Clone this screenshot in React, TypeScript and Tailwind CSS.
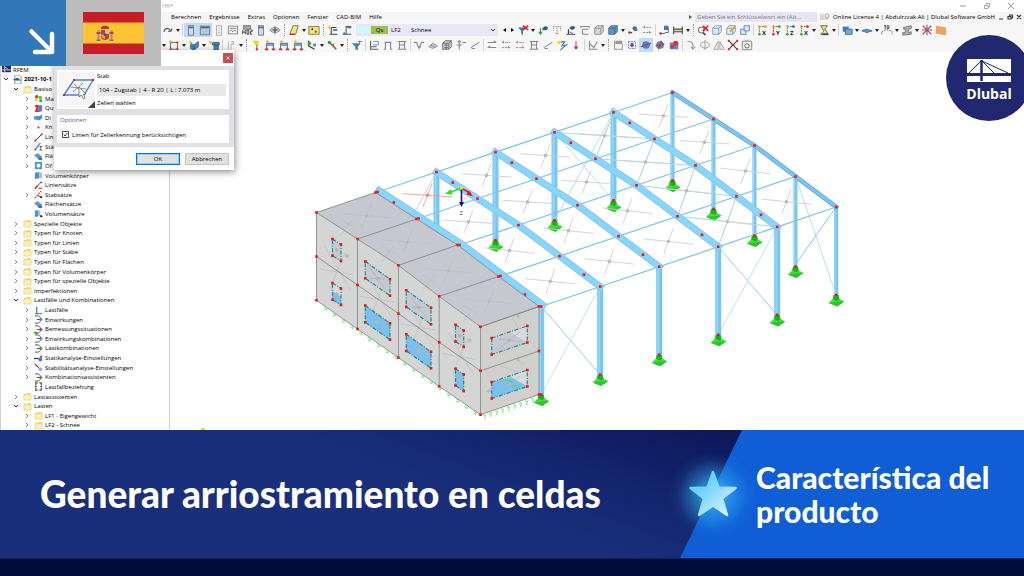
import React from 'react';

type Pt = [number, number];

const menuItems = ['Berechnen', 'Ergebnisse', 'Extras', 'Optionen', 'Fenster', 'CAD-BIM', 'Hilfe'];

/* ---------- toolbar icons, all on a 14 x 14 grid ---------- */

const Axis = ({ label, a, b }: { label: string; a: string; b: string }) => (
    <>
        <path d="M4 12V3H11" fill="none" stroke={a} strokeWidth="1.2" strokeDasharray="2 1" />
        <circle cx="4" cy="3" r="1.6" fill="#e8a21c" />
        <circle cx="11" cy="3" r="1.6" fill={b} />
        <circle cx="4" cy="12" r="1.5" fill={a} />
        <text x="7" y="12.5" fontSize="7" fontWeight="700" fontFamily="Open Sans, sans-serif" fill="#222">{label}</text>
    </>
);

const Cube = ({ fill, line }: { fill: string; line: string }) => (
    <path d="M2 5L5 2H12V9L9 12H2ZM2 5H9V12M9 5L12 2" fill={fill} stroke={line} strokeWidth="1" />
);

const icons: Record<string, React.ReactNode> = {
    undo: <path d="M2 9C4 4 8 4 10 8M7 8.5H10.5L11.5 5" fill="none" stroke="#555" strokeWidth="1.3" />,
    pillar: <><rect x="4" y="2" width="6" height="11" fill="#c7ddf0" stroke="#777" /><path d="M4 4H10" stroke="#667" strokeWidth="2" /></>,
    panel: <><rect x="1.5" y="2.5" width="11" height="10" fill="#b9c7d6" stroke="#778" /><path d="M2 4H12" stroke="#567" strokeWidth="2" /></>,
    sheet: <><rect x="4" y="2" width="6" height="11" fill="#fafafa" stroke="#aaa" /><path d="M6 5H8M6 8H8M6 10H8" stroke="#aaa" /></>,
    wave: <><rect x="1.5" y="2.5" width="11" height="9" fill="#fff" stroke="#777" /><path d="M3 5H11M3 9L5 7L7 9L9 7L11 9" fill="none" stroke="#666" /></>,
    print: <><rect x="3" y="2" width="8" height="4" fill="#aaa" stroke="#666" /><path d="M2 7V12M2 9.5H5M5 7V12M7 7V12H9V7H7M11 7H13V9H11V12H13" fill="none" stroke="#333" /></>,
    eye: <><path d="M1 7C4 3 10 3 13 7C10 11 4 11 1 7Z" fill="#ddd" stroke="#888" /><path d="M7 2V12M3 7H11" stroke="#666" /><circle cx="7" cy="7" r="2" fill="#666" /></>,
    area: <><path d="M2 12L6 2H12L9 12Z" fill="#f6e96b" stroke="#666" /><path d="M2 12H8" stroke="#d22" strokeWidth="1.5" /></>,
    yellow: <><rect x="1" y="3" width="12" height="9" fill="#f8e45c" stroke="#777" /><circle cx="5" cy="6" r="1" /><circle cx="9" cy="9" r="1.3" fill="#666" /></>,
    loadNew: <><path d="M3 12H12M5 12V4H11" fill="none" stroke="#444" strokeWidth="1.2" /><path d="M1 4H5M3 2V6" stroke="#e7cb1a" strokeWidth="1.5" /><path d="M7 7H12" stroke="#3a7bc0" strokeWidth="2" /></>,
    load: <><path d="M2 12H12M6 12V3H12" fill="none" stroke="#555" strokeWidth="1.2" /><path d="M7 4H12M3 10L5 12" stroke="#3a7bc0" strokeWidth="2" /></>,
    filterX: <><path d="M1 4H10L7 8V13L5 11V8Z" fill="#2f76bb" /><path d="M7 2L13 7M13 2L7 7" stroke="#e01818" strokeWidth="1.8" /></>,
    filter: <><path d="M1 5H11L8 9V13L5 12V9Z" fill="#3d83c4" /><path d="M8 3H13M10 2V6" stroke="#777" /></>,
    point: <><path d="M4 5V12M2 9L4 12L6 9" fill="none" stroke="#3a9b3a" strokeWidth="1.3" /><path d="M6 6C8 1 12 2 13 5C11 8 8 8 6 6Z" fill="#345b88" /></>,
    arrows: <path d="M2 3H12M3 4V8M7 4V12M11 4V8M5 10L7 12L9 10" fill="none" stroke="#888" strokeDasharray="2 1" />,
    base: <><path d="M2 12H12M4 12V6" stroke="#444" strokeWidth="1.3" /><path d="M5 5C7 1 11 2 12 4C10 8 7 7 5 5Z" fill="#2f5f99" /><path d="M5 9L9 11" stroke="#b33" /></>,
    frame: <path d="M2 3H12M2 3V5M12 3V5M4 12V6H11M4 12H11" fill="none" stroke="#888" strokeWidth="1.2" />,
    cubeGrey: <Cube fill="#d6d6d6" line="#888" />,
    cubeBlue: <Cube fill="#5b96cc" line="#456b98" />,
    cubeLight: <Cube fill="#dfeaf7" line="#7d97bb" />,
    cubeEdit: <><Cube fill="#dfeaf7" line="#7d97bb" /><path d="M6 9L12 3" stroke="#e69d2c" strokeWidth="2" /></>,
    cubes: <><rect x="2" y="6" width="6" height="6" fill="#dfe8f3" stroke="#6683a8" /><rect x="6" y="2" width="6" height="6" fill="#dfe8f3" stroke="#6683a8" /></>,
    link: <><path d="M2 10H6M8 7H12" stroke="#444" strokeWidth="1.5" /><circle cx="9" cy="5" r="2.5" fill="#3f6eab" /><circle cx="3" cy="10" r="1.5" fill="#c33" /></>,
    dim: <path d="M2 4H12M2 10H12M4 2V6M10 8V12" fill="none" stroke="#888" strokeDasharray="3 1" />,
    diagram: <><path d="M2 11H8M9 4H12V10H8" fill="none" stroke="#555" /><rect x="7" y="2" width="5" height="5" fill="#4678b8" /><circle cx="3" cy="11" r="1.5" fill="#c33" /></>,
    beam: <><path d="M2 3V12M12 3V12M2 6H12M2 9H12" fill="none" stroke="#444" strokeWidth="1.3" /><path d="M3 7.5H11" stroke="#d9c34a" /></>,
    searchX: <><circle cx="5" cy="7" r="3.5" fill="none" stroke="#555" /><path d="M7 10L10 13" stroke="#555" strokeWidth="2" /><path d="M7 2L13 8M13 2L7 8" stroke="#e01818" strokeWidth="1.8" /></>,
    axX: <Axis label="X" a="#36a436" b="#e8a21c" />,
    axY: <Axis label="Y" a="#e42222" b="#36a436" />,
    axZ: <Axis label="Z" a="#36a436" b="#2a62d0" />,
    axN: <Axis label="X" a="#36a436" b="#e42222" />,
    plane: <><path d="M3 2H11L8 6L12 12H3L7 8Z" fill="#f4e66e" stroke="#555" /><path d="M5 12H12" stroke="#444" strokeWidth="2" /></>,
    solid: <><path d="M2 3H9V9H2Z" fill="#467bb5" /><path d="M5 6H13V12H5Z" fill="#7ca6d2" stroke="#44688f" /></>,
    flat: <path d="M1 8L6 6L13 8L7 10Z" fill="#5c9bd5" stroke="#3a6b9e" />,
    ten: <><text x="3" y="6" fontSize="6" fontWeight="700" fontFamily="Open Sans, sans-serif" fill="#333">10</text><path d="M1 12V9C4 6 10 6 13 9V12" fill="none" stroke="#666" strokeDasharray="2 1" /></>,
    isect: <path d="M3 4L12 2V5L9 6V10L12 9V12L2 13V10L5 10V6L3 6Z" fill="#aaa" stroke="#777" />,
    star: <path d="M2 2L12 12M12 2L2 12M7 1V13M1 7H13" stroke="#a85a70" strokeWidth="1.4" />,
    orange: <path d="M1 2L13 4V13L1 11Z" fill="#f0a35a" />,
    member: <><path d="M3 4H11V12H3Z" fill="none" stroke="#555" /><path d="M2 4H4M10 4H12M2 12H4M10 12H12" stroke="#d22" strokeWidth="2.4" /><path d="M1 3H5M3 1V5" stroke="#e7cb1a" /></>,
    solidNew: <><path d="M3 5L7 7V13L3 11ZM7 7L12 3V9L7 13Z" fill="#4d8bc9" stroke="#2f6093" /><path d="M1 4H5M3 2V6" stroke="#e7cb1a" strokeWidth="1.5" /></>,
    wall: <><path d="M5 4H13V7H5ZM7 7H12V13H7Z" fill="#4a83bd" stroke="#345b88" /><path d="M1 4H5M3 2V6" stroke="#e7cb1a" strokeWidth="1.5" /></>,
    ghost: <path d="M4 3V12M7 3H10V6H7V12" fill="none" stroke="#bbb" strokeWidth="1.3" />,
    flag: <><path d="M8 3V13" stroke="#888" strokeWidth="1.5" /><path d="M3 2H10V7H6Z" fill="#f0d71c" /><circle cx="8" cy="12" r="1.3" fill="#d22" /></>,
    hall: <><path d="M3 12V5H11V12M3 7H11" fill="none" stroke="#5e86b5" strokeWidth="1.5" /><path d="M1 12H5M9 12H13" stroke="#d22" strokeWidth="2" /><path d="M2 3H6M4 1V5" stroke="#e7cb1a" strokeWidth="1.4" /></>,
    member2: <><path d="M3 2V8L10 12" fill="none" stroke="#444" strokeWidth="1.5" /><circle cx="4" cy="5" r="2" fill="#3ea53e" /><circle cx="10" cy="7" r="2" fill="#888" /></>,
    green: <><path d="M3 3L12 12" stroke="#d22" strokeWidth="1.5" /><circle cx="4" cy="4" r="2" fill="#2fa52f" /><path d="M6 8L9 5L10 9Z" fill="#2fa52f" /></>,
    axes: <><path d="M3 2V12H12M3 9H10" fill="none" stroke="#666" strokeWidth="1.3" /><path d="M6 3H12V7H6" fill="none" stroke="#5c88bc" /></>,
    portal: <path d="M2 12H4V4H10V12H12M3 4H11" fill="none" stroke="#888" strokeWidth="1.3" />,
    ibeam: <path d="M2 3H12M2 12H12M4 3V12M10 3V12M4 7H10" fill="none" stroke="#888" strokeWidth="1.2" />,
    vee: <path d="M1 4H4L7 11L10 4H13M7 11L9 9" fill="none" stroke="#888" strokeWidth="1.3" />,
    net: <path d="M2 9L7 5L12 8L7 11ZM4 7L10 10" fill="#ccc" stroke="#888" />,
    cubeNet: <><Cube fill="#ccc" line="#666" /><path d="M4 7H8M4 10H8M6 5V12" stroke="#666" /></>,
    updown: <path d="M5 2V12M3 4L5 2L7 4M2 7H8M9 4H13" fill="none" stroke="#888" strokeWidth="1.2" />,
    slope: <path d="M2 10L12 4M3 11H7" stroke="#888" strokeWidth="1.2" />,
    lines: <path d="M2 4H12M2 10H12M9 2L12 4M5 8L2 10" fill="none" stroke="#888" strokeWidth="1.2" />,
    bolt: <><path d="M3 4L10 3L7 8L12 7L5 13" fill="none" stroke="#4a7fc0" strokeWidth="1.4" /><path d="M1 4H6M4 2V6" stroke="#f0dc20" strokeWidth="2" /></>,
    pin: <><path d="M7 2V11" stroke="#e55" strokeWidth="1.3" /><circle cx="7" cy="10" r="2" fill="#d428d4" /></>,
    cut: <path d="M3 2V12H12M3 5L8 10L12 3" fill="none" stroke="#888" strokeWidth="1.2" />,
    list: <><rect x="4" y="2" width="8" height="4" fill="#999" /><path d="M3 2V12H12V6" fill="none" stroke="#888" /></>,
    target: <><path d="M3 3H11V11H3Z" fill="none" stroke="#6a6ab8" strokeDasharray="2 1" /><circle cx="7" cy="7" r="2.2" fill="#5050b0" /></>,
    plate: <><circle cx="7" cy="7" r="4.5" fill="#4d86c2" /><path d="M1 9L13 5" stroke="#c33" strokeWidth="1.4" /></>,
    plate2: <><circle cx="7" cy="7" r="4.5" fill="#4d86c2" /><path d="M5 12L9 2M2 8L12 6" stroke="#c33" strokeWidth="1.4" /></>,
    plate3: <><path d="M2 4H12V12H2Z" fill="#5a8ec4" /><circle cx="9" cy="5" r="3" fill="#d33" /><circle cx="5" cy="9" r="2" fill="#d33" /></>,
    hook: <path d="M3 3C9 2 10 7 9 11M7 9L9 12L12 9" fill="none" stroke="#999" strokeWidth="1.2" />,
    ellipse: <><ellipse cx="7" cy="7" rx="5" ry="3.5" fill="none" stroke="#999" /><path d="M7 1V13" stroke="#999" /></>,
    mirror: <path d="M6 3V12H1ZM8 3V12H13Z" fill="none" stroke="#999" />,
    cross: <><path d="M2 2L12 12M12 2L2 12" stroke="#444" strokeWidth="1.3" /><path d="M1 2H3M11 2H13M1 12H3M11 12H13M5.5 7H8.5" stroke="#e01818" strokeWidth="2.5" /></>,
    camera: <><rect x="1.5" y="2.5" width="11" height="10" rx="1" fill="#eee" stroke="#777" /><circle cx="7" cy="8" r="2.5" fill="#fff" stroke="#555" /><path d="M4 2.5L5 1H9L10 2.5" fill="#bbb" /></>,
};

// "v" = drop-down arrow, "|" = separator, ":" = grip, "*name" = pressed
const rowOneLeft = 'undo v | *pillar *panel sheet wave print pillar eye : area v yellow : loadNew load'.split(' ');
const rowOneRight = 'filterX v point arrows base frame cubeGrey cubeBlue v link dim | diagram beam v : searchX cubeLight cubeEdit cubes | axX axY axZ axN v plane v | solid v flat v ten v isect v star orange'.split(' ');
const rowTwo = 'v member v solidNew v wall | ghost v : flag hall hall hall member2 v green v : filter | axes portal ibeam | vee net cubeNet updown slope | lines dim dim ibeam slope bolt pin | cut v : list target *plate plate2 plate3 | hook ellipse mirror cross camera'.split(' ');

const Tools = ({ items }: { items: string[] }) => (
    <div className="flex items-center shrink-0">
        {items.map((item, i) => {
            if (item === '|') return <span key={i} className="w-px h-3 mx-px bg-gray-300 shrink-0" />;
            if (item === ':') return <span key={i} className="h-3 mx-0.5 border-l border-dotted border-gray-400 shrink-0" />;
            if (item === 'v') {
                return (
                    <button key={i} aria-label="Mehr" className="w-1.5 h-3.5 flex items-center justify-center shrink-0">
                        <svg viewBox="0 0 4 3" className="w-1 h-[3px]"><path d="M0 0H4L2 3Z" fill="#222" /></svg>
                    </button>
                );
            }
            const on = item[0] === '*';
            const name = on ? item.slice(1) : item;
            return (
                <button key={i} aria-label={name} className={`w-3.5 h-3.5 flex items-center justify-center shrink-0 ${on ? 'bg-[#bcdcf7]' : ''}`}>
                    <svg viewBox="0 0 14 14" className="w-3 h-3">{icons[name]}</svg>
                </button>
            );
        })}
    </div>
);

/* ---------- navigator tree ---------- */

interface Row {
    text: string;
    depth: number;
    arrow?: 'open' | 'closed';
    icon: string;
    bold?: boolean;
}

const leaf = (text: string, icon: string, arrow?: 'open' | 'closed'): Row => ({ text, depth: 2, icon, arrow });
const folder = (text: string, arrow: 'open' | 'closed' = 'closed', depth = 1): Row => ({ text, depth, icon: 'folder', arrow });

const rows: Row[] = [
    { text: 'RFEM', depth: -1, icon: 'app' },
    { text: '2021-10-1', depth: 0, icon: 'model', arrow: 'open', bold: true },
    folder('Basiso', 'open'),
    leaf('Ma', 'material', 'closed'),
    leaf('Qu', 'section', 'closed'),
    leaf('Di', 'thick', 'closed'),
    leaf('Kn', 'node', 'closed'),
    leaf('Lin', 'line', 'closed'),
    leaf('Stä', 'bar', 'closed'),
    leaf('Flä', 'surface', 'closed'),
    leaf('Öf', 'opening', 'closed'),
    leaf('Volumenkörper', 'volume'),
    leaf('Liniensätze', 'lineSet'),
    leaf('Stabsätze', 'barSet', 'closed'),
    leaf('Flächensätze', 'surface'),
    leaf('Volumensätze', 'volumeSet'),
    folder('Spezielle Objekte'),
    folder('Typen für Knoten'),
    folder('Typen für Linien'),
    folder('Typen für Stäbe'),
    folder('Typen für Flächen'),
    folder('Typen für Volumenkörper'),
    folder('Typen für spezielle Objekte'),
    folder('Imperfektionen'),
    folder('Lastfälle und Kombinationen', 'open'),
    leaf('Lastfälle', 'loadCase', 'closed'),
    leaf('Einwirkungen', 'action', 'closed'),
    leaf('Bemessungssituationen', 'design', 'closed'),
    leaf('Einwirkungskombinationen', 'action', 'closed'),
    leaf('Lastkombinationen', 'combo', 'closed'),
    leaf('Statikanalyse-Einstellungen', 'static', 'closed'),
    leaf('Stabilitätsanalyse-Einstellungen', 'stability', 'closed'),
    leaf('Kombinationsassistenten', 'wizard', 'closed'),
    leaf('Lastfallbeziehung', 'relation'),
    folder('Lastassistenten'),
    folder('Lasten', 'open'),
    folder('LF1 - Eigengewicht', 'closed', 2),
    folder('LF2 - Schnee', 'closed', 2),
];

const Bracket = ({ dot, dot2 }: { dot: string; dot2?: string }) => (
    <>
        <path d="M1 1H5L7 3V7L5 9H1M3 5H7" fill="none" stroke="#555" strokeWidth="1.1" />
        <circle cx="8" cy="5" r="1.5" fill={dot} />
        {dot2 && <path d="M0 8.5H4" stroke={dot2} strokeWidth="2" />}
    </>
);

const treeIcons: Record<string, React.ReactNode> = {
    folder: <><path d="M1 2H4L5 1H9V9H1Z" fill="#e8d88a" /><path d="M1 3H9V9H1Z" fill="#faf0b0" stroke="#dccb7c" strokeWidth="0.6" /></>,
    app: <><rect x="0" y="1" width="10" height="7" fill="#1b2a6b" /><path d="M0 5.5H10M3 1V8M3 2L7 5" stroke="#fff" strokeWidth="0.8" /></>,
    model: <><path d="M2 0H7L9 2V10H2Z" fill="#fff" stroke="#777" strokeWidth="0.8" /><path d="M0 5L5 3L9 6H2Z" fill="#245f95" /></>,
    material: <><circle cx="3" cy="3" r="2" fill="#e33" /><circle cx="7" cy="4" r="2" fill="#5c3" /><rect x="1" y="5" width="3" height="3" fill="#e8d320" /><rect x="6" y="6" width="3" height="3" fill="#27b427" /></>,
    section: <><path d="M1 1H6V3H5V7H6V9H1V7H2V3H1Z" fill="#d33" /><path d="M5 2L9 1V8L5 9Z" fill="#4c7fd0" /></>,
    thick: <path d="M0 4L7 3L9 1V6L6 8L0 7Z" fill="#4b8ed2" />,
    node: <circle cx="5" cy="5" r="1.2" fill="#d22" />,
    line: <><path d="M1 9L9 1" stroke="#333" strokeWidth="1" /><circle cx="1.5" cy="8.5" r="1.2" fill="#d33" /><circle cx="8.5" cy="1.5" r="1.2" fill="#d33" /></>,
    bar: <><path d="M1 9L7 1" stroke="#4b8ed2" strokeWidth="1.5" /><path d="M6 5H9M7.5 5V9M6 9H9" stroke="#333" strokeWidth="0.8" /><circle cx="1.5" cy="8.5" r="1" fill="#d33" /></>,
    surface: <><path d="M0 4L4 1L9 5L5 8Z" fill="#5a9ad4" /><path d="M5 6H9V9H5Z" fill="#3c70a8" /></>,
    opening: <><rect x="1" y="1" width="8" height="8" fill="#4b8ed2" /><rect x="3" y="3" width="4" height="4" fill="#fff" /></>,
    volume: <><path d="M1 2L6 1V8L1 9Z" fill="#4b8ed2" /><path d="M6 1L9 2V8L6 8Z" fill="#9cc3ea" /></>,
    volumeSet: <><path d="M1 2L5 1V8L1 9Z" fill="#4b8ed2" /><path d="M5 1L7 2V8H5Z" fill="#9cc3ea" /><circle cx="8" cy="8" r="1.3" fill="#333" /></>,
    lineSet: <><path d="M1 9L8 1M5 8L9 8" stroke="#333" strokeWidth="1" /><path d="M1 8L4 5" stroke="#d33" strokeWidth="1.3" /><circle cx="8" cy="1.5" r="1" fill="#d33" /></>,
    barSet: <><path d="M1 9L8 1" stroke="#d33" strokeWidth="1.3" strokeDasharray="2 1" /><path d="M4 6L8 8" stroke="#4b8ed2" strokeWidth="1.5" /><circle cx="8" cy="8" r="1.2" fill="#333" /></>,
    loadCase: <><path d="M3 1V8" stroke="#3f86cf" strokeWidth="1.5" /><path d="M1 8.5H9" stroke="#555" /></>,
    action: <Bracket dot="#3f86ff" />,
    design: <Bracket dot="#d21ad2" dot2="#27b427" />,
    combo: <Bracket dot="#27b427" />,
    wizard: <Bracket dot="#777" />,
    static: <><path d="M0 5H5" stroke="#335" strokeWidth="1.4" /><circle cx="7" cy="6" r="2.3" fill="#4b7ed2" /><circle cx="8" cy="3" r="1.3" fill="#d33" /></>,
    stability: <><path d="M1 1L4 4" stroke="#d33" strokeWidth="1.4" /><path d="M3 3L8 8" stroke="#333" /><circle cx="7" cy="7" r="2" fill="#8aa8d8" /></>,
    relation: <path d="M4 1H2V4M2 6V9H4M6 1H8V4M8 6V9H6M1 5H3M7 5H9" fill="none" stroke="#444" strokeWidth="1.2" />,
};

const Chevron = ({ open }: { open: boolean }) => (
    <svg viewBox="0 0 6 6" className="w-1.5 h-1.5">
        <path d={open ? 'M1 2L3 4L5 2' : 'M2 1L4 3L2 5'} fill="none" stroke={open ? '#333' : '#888'} strokeWidth="1" />
    </svg>
);

const indents: Record<string, string> = { '-1': 'pl-px', '0': 'pl-0.5', '1': 'pl-3', '2': 'pl-[23px]' };

const Navigator = () => (
    <nav className="w-[170px] shrink-0 min-h-0 pt-[13px] flex flex-col bg-white border-l border-r border-[#cfcfdc]">
        {rows.map((row) => (
            <div key={row.text} className={`flex-1 min-h-0 flex items-center text-[6px] leading-none text-black ${indents[row.depth]}`}>
                {row.depth >= 0 && <span className="w-2.5 shrink-0">{row.arrow && <Chevron open={row.arrow === 'open'} />}</span>}
                <svg viewBox="0 0 10 10" className="w-[9px] h-[9px] mr-0.5 shrink-0">{treeIcons[row.icon]}</svg>
                <span className={`whitespace-nowrap ${row.bold ? 'font-bold' : ''}`}>{row.text}</span>
            </div>
        ))}
    </nav>
);

/* ---------- steel hall ---------- */

const frameStart = (i: number): Pt => [377.5 + 59 * i, 192 - 19.9 * i];
const rafter: Pt[] = [[0, 0], [16.3, 10.5], [41, 26.5], [82, 53], [123, 84], [147.5, 102.5], [163.7, 114.5]];
const purlins = [0, 2, 3, 4, 6];
const frames = [0, 1, 2, 3, 4, 5];
const gable = [2, 3, 4, 6];

const at = (frame: number, node: number): Pt => {
    const [x, y] = frameStart(frame);
    return [x + rafter[node][0], y + rafter[node][1]];
};
const down = ([x, y]: Pt, h = 88): Pt => [x, y + h];
const poly = (pts: Pt[]) => pts.map((p) => p.join(',')).join(' ');

const Seg = ({ a, b, stroke, width }: { a: Pt; b: Pt; stroke: string; width: number }) => (
    <line x1={a[0]} y1={a[1]} x2={b[0]} y2={b[1]} stroke={stroke} strokeWidth={width} />
);

const Node = ({ p }: { p: Pt }) => <rect x={p[0] - 1.3} y={p[1] - 1.3} width="2.6" height="2.6" fill="#f01414" />;

const Support = ({ p }: { p: Pt }) => (
    <g transform={`translate(${p[0]} ${p[1]})`}>
        <path d="M-2.5 0H2.5L3.500 4L8 6.500L1 11.500L-7.500 8L-3.500 4Z" fill="#3fdc3f" />
        <path d="M-2.5 0H2.5L3 4L1 6L-3 4Z" fill="#12b812" />
        <path d="M1 7L8 6.500L1 11.500L-7.500 8Z" fill="#30c030" />
    </g>
);

const Column = ({ p, h = 88, wide }: { p: Pt; h?: number; wide: boolean }) => (
    <>
        <Seg a={p} b={down(p, h)} stroke="#7cc3ee" width={wide ? 6 : 4} />
        <Seg a={[p[0] - 1, p[1]]} b={[p[0] - 1, p[1] + h]} stroke="#8cd9fb" width={wide ? 2 : 1.5} />
    </>
);

const Rafter = ({ frame }: { frame: number }) => {
    const pts = poly([at(frame, 0), at(frame, 3), at(frame, 6)]);
    const w = frame === 5 ? 4.5 : 7;
    return (
        <g transform={frame === 0 ? 'translate(1.500 -1.500)' : undefined}>
            <polyline points={pts} fill="none" stroke={frame === 5 ? '#6aa8dc' : '#9db9ee'} strokeWidth={w} strokeLinecap="square" />
            <polyline points={pts} fill="none" stroke={frame === 5 ? '#7cc4f2' : '#84d7fd'} strokeWidth={w - 1.5} strokeLinecap="square" />
        </g>
    );
};

const mix = (a: Pt, b: Pt, t: number): Pt => [a[0] + (b[0] - a[0]) * t, a[1] + (b[1] - a[1]) * t];

const Cell = ({ frame, strip }: { frame: number; strip: number }) => {
    const [n0, n1] = [purlins[strip], purlins[strip + 1]];
    const d1: [Pt, Pt] = [at(frame, n0), at(frame + 1, n1)];
    const d2: [Pt, Pt] = [at(frame, n1), at(frame + 1, n0)];
    const c = mix(d1[0], d1[1], 0.5);
    const first = frame === 0 && strip === 0;
    const color = first ? '#f59a9a' : '#cfcfcf';
    return (
        <g>
            {frame === 3 && <Seg a={d1[0]} b={d1[1]} stroke="#a9d8f3" width={1} />}
            {frame === 3 && <Seg a={d2[0]} b={d2[1]} stroke="#a9d8f3" width={1} />}
            <Seg a={mix(d1[0], d1[1], 0.25)} b={mix(d1[0], d1[1], 0.75)} stroke={color} width={0.9} />
            <Seg a={mix(d2[0], d2[1], 0.25)} b={mix(d2[0], d2[1], 0.75)} stroke={color} width={0.9} />
            <circle cx={c[0]} cy={c[1]} r="1.8" fill={first ? '#f58080' : '#bbb'} />
        </g>
    );
};

/* ---------- concrete block in front of the hall ---------- */

const topEdge: Pt[] = [[316.5, 212.5], [357.5, 239], [398.4, 265.3], [439.2, 296.3], [480.5, 326.8]];
const midEdge: Pt[] = [[316.5, 256.5], [357.5, 285], [398.4, 313.6], [439.2, 342.3], [480.5, 370.8]];
const lowEdge: Pt[] = [[316.5, 300.3], [357.5, 329], [398.4, 357.6], [439.2, 386.3], [480.5, 414.7]];
const roofBack: Pt[] = [[375.5, 192.5], [416.5, 219], [457.5, 245], [498.5, 276.5], [539, 306.5]];
const openings: Pt[][] = [
    [[332.5, 239], [341, 244.5], [341, 261], [332.5, 255.7]],
    [[365.3, 261.5], [390, 279.3], [390, 295.7], [365.3, 278.3]],
    [[406.3, 290.3], [431, 307.7], [431, 324.3], [406.3, 307]],
    [[455.5, 324.7], [463.7, 330.5], [463.7, 347], [455.5, 341.5]],
    [[491.7, 338], [527.3, 326], [527.3, 342.5], [491.7, 354.5]],
];

const Opening = ({ pts, lower }: { pts: Pt[]; lower: boolean }) => {
    const side = pts[0][0] > 490;
    const half = lower && pts[0][0] < 340;
    const small = pts[1][0] - pts[0][0] < 10;
    const fill = lower ? '#78c0ef' : '#c6c9d1';
    const c = mix(pts[0], pts[2], 0.5);
    return (
        <g>
            <polygon points={poly(pts)} fill={side || half ? '#dadada' : fill} />
            {side && <polygon points={poly([[491.7, pts[0][1]], [511, pts[0][1] - 5], [527.3, pts[2][1]], pts[3]])} fill={fill} />}
            {half && <polygon points={poly([mix(pts[0], pts[3], 0.5), mix(pts[1], pts[2], 0.5), pts[2], pts[3]])} fill={fill} />}
            {!small && <Seg a={mix(pts[0], pts[2], 0.2)} b={mix(pts[0], pts[2], 0.8)} stroke="#b0b0b0" width={0.7} />}
            {!small && <Seg a={mix(pts[1], pts[3], 0.2)} b={mix(pts[1], pts[3], 0.8)} stroke="#b0b0b0" width={0.7} />}
            <circle cx={c[0]} cy={c[1]} r="1.8" fill="#b4b4b4" />
            {lower && side && <path d={`M${c[0] - 5} ${c[1] - 4}l8 1M${c[0] + 3} ${c[1] + 1}l7 3`} stroke="#4be04b" strokeWidth="1" />}
            <polygon points={poly(pts)} fill="none" stroke="#2b8583" strokeWidth="1.2" strokeDasharray="4 1.5 1 1.5" />
            {pts.map((p, i) => <Node key={i} p={p} />)}
        </g>
    );
};

const Block = () => (
    <g>
        <polygon points={poly([...topEdge, ...[...roofBack].reverse()])} fill="#c5c8ce" />
        <polygon points={poly([...topEdge, lowEdge[4], lowEdge[0]])} fill="#d4d5d5" />
        <polygon points={poly([topEdge[4], roofBack[4], [539, 394.5], lowEdge[4]])} fill="#d0d0ce" />
        {topEdge.slice(0, 4).map((p, i) => {
            const c = mix(p, roofBack[i + 1], 0.5);
            const m = mix(p, lowEdge[i + 1], 0.5);
            return (
                <g key={i} stroke="#bcbdc0" strokeWidth="0.7">
                    <path d={`M${c[0] - 24} ${c[1] - 2}l48 4M${c[0] + 5} ${c[1] - 12}l-10 24`} />
                    <path d={`M${c[0] - 26} ${c[1] + 4}l14 8M${c[0] - 14} ${c[1] + 4}l-12 16`} />
                    <path d={`M${m[0] - 12} ${m[1] - 24}l26 44M${m[0] - 18} ${m[1] - 2}l34 6M${m[0] + 8} ${m[1] - 18}l-16 38`} />
                    <circle cx={c[0]} cy={c[1]} r="1.2" fill="#b5b6b8" />
                    <circle cx={m[0] + 10} cy={m[1] - 15} r="1.8" fill="#bcbcbc" />
                </g>
            );
        })}
        <path d="M500 366L524 374M514 358L524 364M486 392L506 388M512 318L526 340" stroke="#bdbdbd" strokeWidth="0.8" />
        <circle cx="518" cy="316" r="1.8" fill="#bcbcbc" />
        <circle cx="518" cy="360" r="1.8" fill="#bcbcbc" />
        <circle cx="489" cy="391" r="1.8" fill="#bcbcbc" />
        <g fill="none" stroke="#8a8a8a" strokeWidth="0.9">
            <polyline points={poly(topEdge)} />
            <polyline points={poly(midEdge)} />
            <polyline points={poly(lowEdge)} />
            <polyline points={poly([topEdge[4], roofBack[4], [539, 394.5], lowEdge[4]])} />
            <polyline points={poly([midEdge[4], [539, 351]])} />
            <polyline points={poly(roofBack)} />
            {topEdge.map((p, i) => <polyline key={i} points={poly([lowEdge[i], p, roofBack[i]])} />)}
        </g>
        {/* line supports along the base */}
        <g fill="none" stroke="#6fe86f" strokeWidth="1">
            {Array.from({ length: 18 }, (_, i) => (
                <path key={i} d={`M${324 + i * 8.8} ${306.5 + i * 6.15}l2.500 1.500v2l-2.500 -1`} />
            ))}
            {Array.from({ length: 9 }, (_, i) => (
                <path key={i} d={`M${483 + i * 6} ${415 - i * 2}h2.500l-1 4`} />
            ))}
        </g>
        {openings.map((pts, i) => (
            <g key={i}>
                <Opening pts={pts} lower={false} />
                <Opening pts={pts.map(([x, y]): Pt => [x, y + 44])} lower />
            </g>
        ))}
        {[...topEdge, ...midEdge, ...lowEdge, ...roofBack, [539, 351] as Pt, [539, 394.5] as Pt].map((p, i) => <Node key={i} p={p} />)}
    </g>
);

const Model = () => (
    <svg viewBox="170 52 854 378" preserveAspectRatio="xMidYMin slice" className="w-full h-full" role="img" aria-label="RFEM">
        {frames.slice(2).map((f) => <Support key={f} p={down(at(f, 0))} />)}
        {gable.map((n) => <Support key={n} p={down(at(5, n), n === 6 ? 88 : 90)} />)}
        {frames.slice(1).map((f) => <Column key={f} p={at(f, 0)} wide={f !== 5} />)}
        {gable.map((n) => <Column key={n} p={at(5, n)} h={n === 6 ? 88 : 90} wide={false} />)}
        <Seg a={at(3, 0)} b={down(at(4, 0))} stroke="#b4def5" width={1} />
        <Seg a={at(4, 0)} b={down(at(3, 0))} stroke="#b4def5" width={1} />
        <Seg a={at(1, 0)} b={[405, 230]} stroke="#b4def5" width={1} />
        <Seg a={at(5, 4)} b={down(at(5, 6))} stroke="#b4def5" width={1} />
        <Seg a={at(5, 6)} b={down(at(5, 4))} stroke="#8ac7eb" width={1} />
        {purlins.map((n) => <Seg key={n} a={at(0, n)} b={at(5, n)} stroke="#84c4ea" width={1.3} />)}
        {frames.slice(0, 5).map((f) => [0, 1, 2, 3].map((s) => <Cell key={`${f}-${s}`} frame={f} strip={s} />))}
        {[0, 3].map((f) => (
            <g key={f}>
                <Seg a={at(f, 6)} b={down(at(f + 1, 6))} stroke="#97cdec" width={1} />
                <Seg a={at(f + 1, 6)} b={down(at(f, 6))} stroke="#bfe3f6" width={1} />
            </g>
        ))}
        {frames.slice(0, 5).map((f) => (
            <g key={f}>
                <Support p={down(at(f, 6))} />
                <Column p={at(f, 6)} wide />
                <Node p={down(at(f, 6))} />
            </g>
        ))}
        {[...frames].reverse().map((f) => <Rafter key={f} frame={f} />)}
        {frames.map((f) => rafter.map((_, n) => (f === 5 && (n === 1 || n === 5) ? null : <Node key={`${f}-${n}`} p={at(f, n)} />)))}
        {[2, 3, 4, 5].map((f) => <Node key={f} p={down(at(f, 0))} />)}
        {gable.map((n) => <Node key={n} p={down(at(5, n), n === 6 ? 88 : 90)} />)}
        <Block />
        {/* global axes */}
        <path d="M461 188L449 193" stroke="#22e022" strokeWidth="1.6" />
        <path d="M451 189L445 194L452 194.5Z" fill="#22e022" />
        <path d="M461 188L470 193" stroke="#e81414" strokeWidth="1.6" />
        <path d="M469 190.5L473 196.5L466.5 194.5Z" fill="#e81414" />
        <path d="M461.5 188V203" stroke="#14148c" strokeWidth="1.6" />
        <path d="M459 202H464L461.5 207Z" fill="#14148c" />
        <rect x="460" y="186.5" width="3" height="3" fill="#f2e21c" />
        <text x="459.5" y="214.5" fontSize="6" fontFamily="Open Sans, sans-serif" fill="#3b3ba5">Z</text>
        <rect x="201" y="428" width="4" height="2" fill="#e6e61a" />
    </svg>
);

/* ---------- dialog ---------- */

const CellDialog = () => (
    <section role="dialog" aria-label="Stab" className="absolute left-[54px] top-[50px] w-[180px] bg-white text-[6px] leading-none text-black shadow-[1px_2px_7px_rgba(0,0,0,0.45)]">
        <div className="h-4 flex justify-end p-[3px] pr-px">
            <button aria-label="Schließen" className="w-2.5 h-2.5 flex items-center justify-center bg-[#c75050]">
                <svg viewBox="0 0 6 6" className="w-1 h-1"><path d="M1 1L5 5M5 1L1 5" stroke="#fff" strokeWidth="1.4" /></svg>
            </button>
        </div>
        <div className="bg-[#e0e0e4] pl-[3px] py-1 pr-[5px] flex flex-col gap-1.5">
            <div className="bg-white h-[39px] flex items-center gap-0.5 p-0.5">
                <button aria-label="Zelle" className="w-9 h-9 shrink-0 bg-[#f6f6f6]">
                    <svg viewBox="0 0 36 36" className="w-9 h-9">
                        <path d="M5 23L15 8H34L25 23Z" fill="none" stroke="#4f82c4" strokeWidth="1.4" />
                        <path d="M14 20L24 11M15 12L23 20M12 15L27 17" stroke="#777" strokeWidth="0.8" />
                        <path d="M20 15V25L22.500 23L24.500 27L26 26L24.500 22H27Z" fill="#fff" stroke="#666" strokeWidth="0.8" />
                        <path d="M4 23H6M14 8H16M33 8H35" stroke="#d22" strokeWidth="2" />
                        <path d="M36 29V36H29Z" fill="#444" />
                    </svg>
                </button>
                <div className="flex-1 flex flex-col justify-between h-full py-px">
                    <span>Stab</span>
                    <span className="bg-[#e8e8e8] h-3 px-0.5 mr-px flex items-center whitespace-nowrap">104 - Zugstab | 4 - R 20 | L : 7.073 m</span>
                    <span>Zellen wählen</span>
                </div>
            </div>
            <div className="bg-white h-7 px-[3px] py-0.5">
                <p className="text-[#4b5f8c]">Optionen</p>
                <label className="flex items-center gap-[3px] mt-2 ml-0.5 whitespace-nowrap">
                    <span className="grid w-[7px] h-[7px]">
                        <input type="checkbox" defaultChecked className="peer appearance-none col-start-1 row-start-1 border border-[#555] bg-white" />
                        <svg viewBox="0 0 7 7" className="w-[7px] h-[7px] col-start-1 row-start-1 pointer-events-none invisible peer-checked:visible">
                            <path d="M2 3.5L3 5L5.5 2" fill="none" stroke="#222" strokeWidth="0.9" />
                        </svg>
                    </span>
                    Linien für Zellerkennung berücksichtigen
                </label>
            </div>
        </div>
        <div className="h-[23px] flex items-center justify-end gap-[5px] pr-[5px]">
            <button className="w-11 h-3 border border-[#0078d7] ring-1 ring-inset ring-[#9ccbf0] bg-[#e1e1e1]">OK</button>
            <button className="w-11 h-3 border border-[#c4c4c4] bg-[#e1e1e1]">Abbrechen</button>
        </div>
    </section>
);

/* ---------- badges and banner ---------- */

const SpanishFlag = () => (
    <svg viewBox="0 0 61 42" className="w-[61px] h-[42px]" role="img" aria-label="España">
        <rect width="61" height="42" fill="#c51e25" />
        <rect y="10.5" width="61" height="21" fill="#fdc333" />
        <g fill="#b5443c">
            <path d="M18 18H26V25C26 29 18 29 18 25Z" />
            <path d="M18 15.5C19 13 25 13 26 15.5V17H18Z" fill="#a33b32" />
            <rect x="14.5" y="18" width="2" height="10" fill="#b58a80" />
            <rect x="27.5" y="18" width="2" height="10" fill="#b58a80" />
            <path d="M13.5 20H17.5V22H13.5ZM26.5 20H30.5V22H26.5Z" />
            <path d="M13.5 27.5H17.5V29H13.5ZM26.5 27.5H30.5V29H26.5Z" fill="#6d6f9d" />
        </g>
        <path d="M22 18H26V22H22Z" fill="#e8b4ae" />
        <path d="M18 22.5H22V27L19 26Z" fill="#e6a22a" />
        <circle cx="22" cy="22.5" r="1.3" fill="#35519a" />
    </svg>
);

const DlubalLogo = () => (
    <div className="absolute left-[calc(100%-78px)] top-[35px] w-[86px] h-[86px] rounded-full bg-[#22286f] flex flex-col items-center pt-6 text-white">
        <svg viewBox="0 0 44 23" className="w-11 h-[23px]" aria-hidden="true">
            <rect width="44" height="14" fill="#fff" />
            <rect y="17" width="44" height="6" fill="#fff" />
            <path d="M14.5 1V22" stroke="#22286f" strokeWidth="2.5" />
            <path d="M14 2L2 14M15 2L27 14M15 2L41 14" stroke="#22286f" strokeWidth="1" fill="none" />
        </svg>
        <span className="mt-1 text-[14px] leading-4 font-bold">Dlubal</span>
    </div>
);

const StarIcon = () => (
    <svg viewBox="0 0 48 48" className="w-12 h-12 shrink-0 overflow-visible" aria-hidden="true">
        <defs>
            <radialGradient id="glow">
                <stop offset="0.2" stopColor="#35b4f5" stopOpacity="0.75" />
                <stop offset="0.55" stopColor="#35b4f5" stopOpacity="0.35" />
                <stop offset="0.8" stopColor="#35b4f5" stopOpacity="0.08" />
                <stop offset="1" stopColor="#35b4f5" stopOpacity="0" />
            </radialGradient>
            <linearGradient id="star" x1="0" y1="0" x2="1" y2="1">
                <stop offset="0.3" stopColor="#6bd0ff" />
                <stop offset="0.9" stopColor="#d5f1ff" />
            </linearGradient>
        </defs>
        <circle cx="24" cy="25" r="44" fill="url(#glow)" />
        <path
            d="M24 2L29.5 17.5L46.5 18L33 28.5L38 45L24 35.5L10 45L15 28.5L1.5 18L18.5 17.5Z"
            fill="url(#star)" stroke="url(#star)" strokeWidth="2.5" strokeLinejoin="round"
        />
    </svg>
);

const Banner = () => (
    <footer className="shrink-0 font-['Lato',sans-serif] text-white">
        <div className="h-32 flex items-center justify-between bg-[linear-gradient(20deg,#192f7c_45%,#0a1657_82%)]">
            <h1 className="pl-10 text-[37px] leading-10 font-black whitespace-nowrap">Generar arriostramiento en celdas</h1>
            <div className="relative w-[344px] h-full shrink-0 flex items-center pl-[9px]">
                <div className="absolute inset-0 bg-[#0f5ed6] [clip-path:polygon(62px_0,100%_0,100%_100%,0_100%)]" />
                <div className="relative flex items-center gap-[19px]">
                    <StarIcon />
                    <h2 className="text-[30px] leading-[34px] font-black whitespace-nowrap">Característica del<br />producto</h2>
                </div>
            </div>
        </div>
        <div className="h-[18px] bg-[#020c36] border-t border-[#101f5e]" />
    </footer>
);

export default function App() {
    return (
        <div className="relative h-screen flex flex-col overflow-hidden bg-white font-['Open_Sans','Noto_Sans',sans-serif]">
            <header className="shrink-0 text-[6px] leading-none text-black">
                <div className="h-3 flex items-center justify-between pl-[162px] pr-2.5 text-[#999]">
                    <span>rf6*</span>
                    <div className="flex gap-[18px]">
                        <button aria-label="Minimieren" className="w-1.5"><svg viewBox="0 0 6 6" className="w-1.5 h-1.5"><path d="M0 3H6" stroke="#999" /></svg></button>
                        <button aria-label="Wiederherstellen" className="w-1.5"><svg viewBox="0 0 6 6" className="w-1.5 h-1.5"><path d="M.5 2.5H4V5.5H.5ZM2 2V.5H5.5V4H4" fill="none" stroke="#888" strokeWidth="0.7" /></svg></button>
                        <button aria-label="Beenden" className="w-1.5"><svg viewBox="0 0 6 6" className="w-1.5 h-1.5"><path d="M0 0L6 6M6 0L0 6" stroke="#888" strokeWidth="0.8" /></svg></button>
                    </div>
                </div>
                <div className="h-2.5 flex items-center bg-[#f6f6f6] pl-[171px] pr-0.5">
                    <div className="flex gap-2">
                        {menuItems.map((m) => <button key={m}>{m}</button>)}
                    </div>
                    <div className="ml-auto flex items-center gap-[3px]">
                        <svg viewBox="0 0 3 4" className="w-[3px] h-1"><path d="M0 0L3 2L0 4Z" fill="#555" /></svg>
                        <input aria-label="Suche" placeholder="Geben Sie ein Schlüsselwort ein (Alt..." className="w-[122px] h-2.5 px-0.5 bg-[#e6e6f2] placeholder:text-[#777]" />
                        <svg viewBox="0 0 10 8" className="w-2.5 h-2"><path d="M0 2H4M0 4H4M0 6H8M7 6V4" stroke="#bbb" /><circle cx="7" cy="3" r="2" fill="none" stroke="#aaa" /></svg>
                        <span className="whitespace-nowrap">Online License 4 | Abdulrzzak Ali | Dlubal Software GmbH</span>
                        <svg viewBox="4 0 24 6" className="w-6 h-1.5"><path d="M5 5H9M14 2.5H17V5H14ZM15.5 2V1H18.5V4H17M23 1L27 5M27 1L23 5" fill="none" stroke="#333" strokeWidth="1.1" /></svg>
                    </div>
                </div>
                <div className="h-4 flex items-center bg-[#f7f7f7] pl-[161px]">
                    <Tools items={rowOneLeft} />
                    <div className="flex items-center w-[142px] h-3 ml-0.5 mr-0.5 bg-[#e8e8f4] shrink-0">
                        <span className="w-[15px] h-1.5 bg-[#cdfafa]" />
                        <span className="w-[17px] h-2 bg-[#9bbf50] text-center leading-[8px]">Qs</span>
                        <span className="ml-[3px] w-5">LF2</span>
                        <span>Schnee</span>
                        <button aria-label="Lastfall" className="ml-auto mr-0.5"><Chevron open /></button>
                    </div>
                    <button aria-label="Zurück" className="w-2 shrink-0 flex justify-center"><svg viewBox="0 0 3 4" className="w-[3px] h-1"><path d="M3 0L0 2L3 4Z" fill="#111" /></svg></button>
                    <button aria-label="Weiter" className="w-2 shrink-0 flex justify-center"><svg viewBox="0 0 3 4" className="w-[3px] h-1"><path d="M0 0L3 2L0 4Z" fill="#111" /></svg></button>
                    <Tools items={rowOneRight} />
                </div>
                <div className="h-3.5 flex items-center bg-[#f7f7f7] pl-[161px]">
                    <Tools items={rowTwo} />
                </div>
            </header>

            <main className="flex-1 min-h-0 flex">
                <Navigator />
                <div className="flex-1 min-w-0 min-h-0 overflow-hidden">
                    <Model />
                </div>
            </main>

            <CellDialog />
            <div className="absolute left-0 top-0 flex h-[66px]">
                <div className="w-[66px] bg-[#3278b8]">
                    <svg viewBox="0 0 66 66" className="w-[66px] h-[66px]" aria-hidden="true">
                        <path d="M31.5 31.5L51 51M52 34V52H35" fill="none" stroke="#fff" strokeWidth="4.5" strokeLinecap="round" strokeLinejoin="round" />
                    </svg>
                </div>
                <div className="w-[95px] bg-[#bcbcbc] flex justify-center pt-3">
                    <SpanishFlag />
                </div>
            </div>
            <DlubalLogo />

            <Banner />
        </div>
    );
}
